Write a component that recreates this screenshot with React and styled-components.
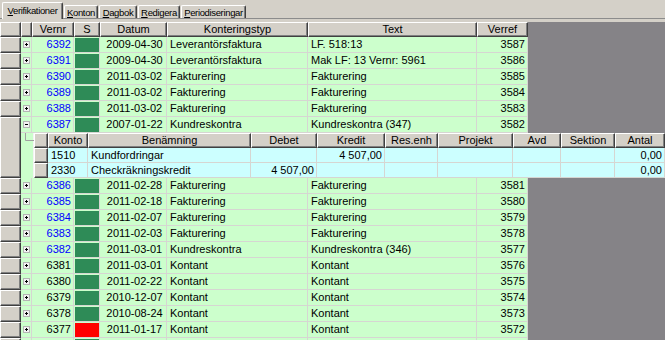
import React from 'react'
import styled, { createGlobalStyle } from 'styled-components'

const Global = createGlobalStyle`
  html, body {
    margin: 0;
    padding: 0;
    background: #d4d0c8;
  }
  body {
    font-family: "Liberation Sans", Arial, sans-serif;
  }
`

const Window = styled.div`
  width: 665px;
  height: 340px;
  overflow: hidden;
  background: #d4d0c8;
  display: flex;
  flex-direction: column;
`

const TabStrip = styled.div`
  flex: none;
  display: flex;
  align-items: flex-end;
  gap: 1px;
  height: 19px;
  padding-left: 2px;
  box-sizing: border-box;
  border-bottom: 1px solid #8c8c8c;
`

const Tab = styled.div`
  box-sizing: border-box;
  width: ${p => p.w}px;
  height: ${p => (p.active ? 17 : 13)}px;
  margin-bottom: ${p => (p.active ? -1 : 0)}px;
  background: #d4d0c8;
  border-top: 1px solid #fff;
  border-left: 1px solid #fff;
  border-right: 1px solid #404040;
  box-shadow: inset -1px 0 #808080;
  border-radius: 2px 2px 0 0;
  font-size: 9.5px;
  letter-spacing: -0.35px;
  color: #000;
  display: flex;
  align-items: center;
  justify-content: center;
  padding-bottom: ${p => (p.active ? 2 : 0)}px;
  white-space: nowrap;
`

const Spacer = styled.div`
  flex: none;
  height: 3px;
`

const Grid = styled.div`
  flex: 1;
  background: #858387;
  overflow: hidden;
  display: flex;
  flex-direction: column;
  font-size: 11px;
  color: #000;
`

const HeaderRow = styled.div`
  flex: none;
  display: flex;
  height: ${p => p.h}px;
`

const HeaderCell = styled.div`
  flex: none;
  box-sizing: border-box;
  width: ${p => p.w}px;
  height: 100%;
  background: #d4d0c8;
  border-top: 1px solid #fff;
  border-left: 1px solid #fff;
  border-right: 1px solid #404040;
  border-bottom: 1px solid #404040;
  box-shadow: inset -1px -1px #808080;
  text-align: center;
  line-height: ${p => p.lh || 12}px;
  white-space: nowrap;
  overflow: hidden;
`

const Record = styled.div`
  flex: none;
  display: flex;
`

const RowHead = styled.div`
  flex: none;
  box-sizing: border-box;
  width: ${p => p.w}px;
  background: #d4d0c8;
  border-top: 1px solid #fff;
  border-left: 1px solid #fff;
  border-right: 1px solid #404040;
  border-bottom: 1px solid #404040;
  box-shadow: inset -1px -1px #808080;
`

const Body = styled.div`
  flex: 1;
  min-width: 0;
  display: flex;
  flex-direction: column;
`

const Line = styled.div`
  display: flex;
  height: ${p => p.h}px;
`

const Cell = styled.div`
  flex: none;
  box-sizing: border-box;
  width: ${p => p.w}px;
  height: 100%;
  background: ${p => p.bg};
  border-right: 1px solid #d6d6d2;
  border-bottom: 1px solid #d6d6d2;
  padding: 0 ${p => (p.align === 'center' ? 0 : 2)}px 0 3px;
  text-align: ${p => p.align || 'left'};
  color: ${p => p.color || '#000'};
  line-height: ${p => p.lh}px;
  white-space: nowrap;
  overflow: hidden;
`

const SwatchCell = styled.div`
  flex: none;
  box-sizing: border-box;
  width: ${p => p.w}px;
  height: 100%;
  background: #ccffcc;
  border-right: 1px solid #d6d6d2;
  border-bottom: 1px solid #d6d6d2;
  padding: 1px 0 0 1px;
`

const Swatch = styled.div`
  width: 100%;
  height: 100%;
  background: ${p => p.color || 'transparent'};
`

const Expander = styled.div`
  flex: none;
  box-sizing: border-box;
  width: 11px;
  height: 100%;
  background: #ccffcc;
  border-bottom: 1px solid #d6d6d2;
  border-right: 1px solid #d6d6d2;
  display: flex;
  align-items: center;
  justify-content: center;
`

const ToggleBox = styled.svg`
  display: block;
`

const Detail = styled.div`
  display: flex;
  height: 45px;
`

const TreeGutter = styled.div`
  flex: none;
  width: 13px;
  background: #ccffcc;
  border-right: 1px solid #f4f4f4;
  box-sizing: border-box;
`

const SubGrid = styled.div`
  flex: 1;
  min-width: 0;
  display: flex;
  flex-direction: column;
  overflow: hidden;
`

const subCols = [
  { key: 'konto', title: 'Konto', w: 40 },
  { key: 'namn', title: 'Benämning', w: 163 },
  { key: 'debet', title: 'Debet', w: 66, align: 'right' },
  { key: 'kredit', title: 'Kredit', w: 68, align: 'right' },
  { key: 'res', title: 'Res.enh', w: 53 },
  { key: 'projekt', title: 'Projekt', w: 75 },
  { key: 'avd', title: 'Avd', w: 48 },
  { key: 'sektion', title: 'Sektion', w: 54 },
  { key: 'antal', title: 'Antal', w: 50, align: 'right' }
]

const mainCols = [
  { key: 'vernr', title: 'Vernr', w: 42 },
  { key: 's', title: 'S', w: 26 },
  { key: 'datum', title: 'Datum', w: 67 },
  { key: 'typ', title: 'Konteringstyp', w: 141 },
  { key: 'text', title: 'Text', w: 169 },
  { key: 'verref', title: 'Verref', w: 51 }
]

const GREEN = '#2e8b57'
const RED = '#ff0000'

const records = [
  ['6392', GREEN, '2009-04-30', 'Leverantörsfaktura', 'LF. 518:13', '3587', true],
  ['6391', GREEN, '2009-04-30', 'Leverantörsfaktura', 'Mak LF: 13 Vernr: 5961', '3586', true],
  ['6390', GREEN, '2011-03-02', 'Fakturering', 'Fakturering', '3585', true],
  ['6389', GREEN, '2011-03-02', 'Fakturering', 'Fakturering', '3584', true],
  ['6388', GREEN, '2011-03-02', 'Fakturering', 'Fakturering', '3583', true],
  ['6387', GREEN, '2007-01-22', 'Kundreskontra', 'Kundreskontra (347)', '3582', true, true],
  ['6386', GREEN, '2011-02-28', 'Fakturering', 'Fakturering', '3581', true],
  ['6385', GREEN, '2011-02-18', 'Fakturering', 'Fakturering', '3580', true],
  ['6384', GREEN, '2011-02-07', 'Fakturering', 'Fakturering', '3579', true],
  ['6383', GREEN, '2011-02-03', 'Fakturering', 'Fakturering', '3578', true],
  ['6382', GREEN, '2011-03-01', 'Kundreskontra', 'Kundreskontra (346)', '3577', true],
  ['6381', GREEN, '2011-03-01', 'Kontant', 'Kontant', '3576'],
  ['6380', GREEN, '2011-02-22', 'Kontant', 'Kontant', '3575'],
  ['6379', GREEN, '2010-12-07', 'Kontant', 'Kontant', '3574'],
  ['6378', GREEN, '2010-08-24', 'Kontant', 'Kontant', '3573'],
  ['6377', RED, '2011-01-17', 'Kontant', 'Kontant', '3572'],
  // next row, scrolled almost entirely out of view
  ['', GREEN, '', '', '', '']
]

const transactions = [
  { konto: '1510', namn: 'Kundfordringar', debet: '', kredit: '4 507,00', antal: '0,00' },
  { konto: '2330', namn: 'Checkräkningskredit', debet: '4 507,00', kredit: '', antal: '0,00' }
]

const Toggle = ({ open }) => (
  <ToggleBox width="7" height="7" viewBox="0 0 7 7">
    <rect x="0.5" y="0.5" width="6" height="6" fill="#f2f2f2" stroke="#b4b4b4" />
    <line x1="2" y1="3.5" x2="5" y2="3.5" stroke="#000" />
    {!open && <line x1="3.5" y1="2" x2="3.5" y2="5" stroke="#000" />}
  </ToggleBox>
)

const TreeLine = () => (
  <svg width="13" height="45" viewBox="0 0 13 45" style={{ display: 'block' }}>
    <path d="M4.5 0 V7.5 H13" stroke="#a0a0a0" fill="none" />
  </svg>
)

const Transactions = () => (
  <Detail>
    <TreeGutter>
      <TreeLine />
    </TreeGutter>
    <SubGrid>
      <HeaderRow h={15}>
        <HeaderCell w={14} />
        {subCols.map(c => (
          <HeaderCell key={c.key} w={c.w} lh={12}>{c.title}</HeaderCell>
        ))}
      </HeaderRow>
      {transactions.map(t => (
        <Record key={t.konto}>
          <RowHead w={14} />
          <Line h={15}>
            {subCols.map(c => (
              <Cell key={c.key} w={c.w} bg="#ccffff" align={c.align} lh={14}>
                {t[c.key] || ''}
              </Cell>
            ))}
          </Line>
        </Record>
      ))}
    </SubGrid>
  </Detail>
)

export default function App() {
  return (
    <Window>
      <Global />
      <TabStrip>
        <Tab active w={61}><span><u>V</u>erifikationer</span></Tab>
        <Tab w={34}><span><u>K</u>onton</span></Tab>
        <Tab w={38}><span><u>D</u>agbok</span></Tab>
        <Tab w={42}><span><u>R</u>edigera</span></Tab>
        <Tab w={65}><span><u>P</u>eriodiseringar</span></Tab>
      </TabStrip>
      <Spacer />
      <Grid>
        <HeaderRow h={15}>
          <HeaderCell w={21} />
          <HeaderCell w={11} />
          {mainCols.map(c => (
            <HeaderCell key={c.key} w={c.w} lh={13}>{c.title}</HeaderCell>
          ))}
        </HeaderRow>
        {records.map(([vernr, status, datum, typ, text, verref, blue, open], i) => (
          <Record key={vernr || i}>
            <RowHead w={21} />
            <Body>
              <Line h={16}>
                <Expander>
                  {vernr && <Toggle open={open} />}
                </Expander>
                <Cell w={42} bg="#ccffcc" align="right" lh={15} color={blue ? '#0000ff' : '#000'}>{vernr}</Cell>
                <SwatchCell w={26}>
                  <Swatch color={status} />
                </SwatchCell>
                <Cell w={67} bg="#ccffcc" align="center" lh={15}>{datum}</Cell>
                <Cell w={141} bg="#ccffcc" lh={15}>{typ}</Cell>
                <Cell w={169} bg="#ccffcc" lh={15}>{text}</Cell>
                <Cell w={51} bg="#ccffcc" align="right" lh={15}>{verref}</Cell>
              </Line>
              {open && <Transactions />}
            </Body>
          </Record>
        ))}
      </Grid>
    </Window>
  )
}
